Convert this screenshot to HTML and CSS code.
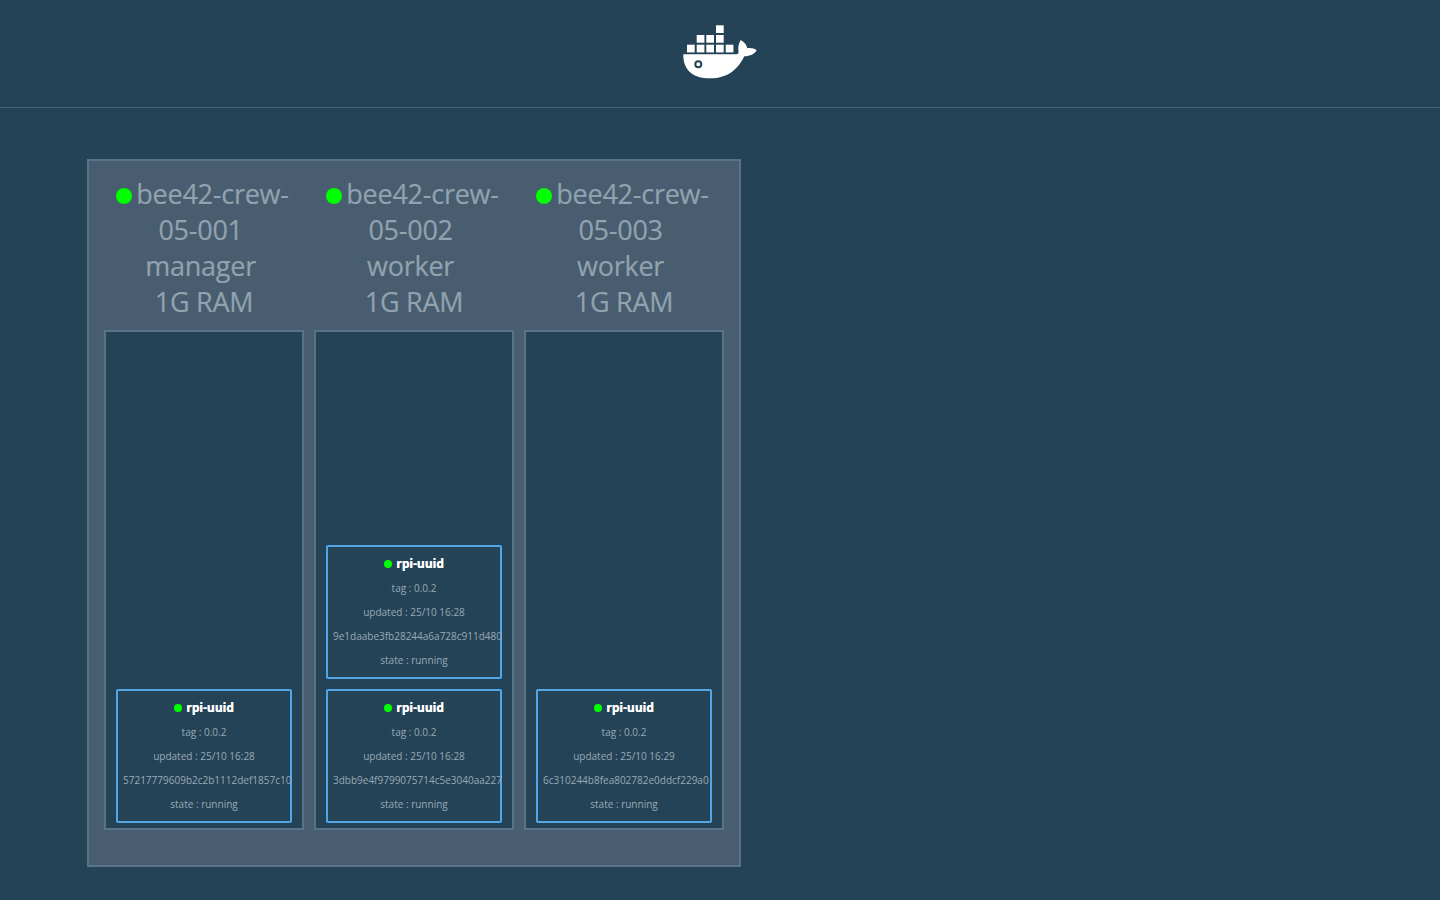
FILE: index.html
```html
<!DOCTYPE html>
<html lang="en">
<head>
    <meta charset="UTF-8">
    <meta name="viewport" content="width=device-width, initial-scale=1.0">
    <title>Swarm Visualizer</title>
    <link rel="stylesheet" href="styles.css">
</head>
<body>
    <header class="topbar">
        <svg class="logo" width="74" height="54" viewBox="0 0 74 54" fill="#fff">
            <rect x="33" y="0.3" width="7.7" height="7.7"/>
            <rect x="13.7" y="10" width="7.7" height="7.7"/>
            <rect x="23.3" y="10" width="7.7" height="7.7"/>
            <rect x="33" y="10" width="7.7" height="7.7"/>
            <rect x="4" y="19.7" width="7.7" height="7.7"/>
            <rect x="13.7" y="19.7" width="7.7" height="7.7"/>
            <rect x="23.3" y="19.7" width="7.7" height="7.7"/>
            <rect x="33" y="19.7" width="7.7" height="7.7"/>
            <rect x="42.7" y="19.7" width="7.7" height="7.7"/>
            <path d="M0.3 29.3H52C54.5 29.3 56 28.6 55.5 26.5C54.8 22.5 55.6 18.5 57.7 15C60.8 16.5 63.5 19.5 64.3 23.3C67.5 22.6 71 23.2 73.7 25.2C71.8 29 67 31.2 61.3 31.2C57.5 39 51.5 46.5 43.7 50C37 53 30 53.6 23.7 53.3C11 52.5 0 46 0.3 29.3Z"/>
            <circle cx="15.3" cy="39.3" r="3" fill="none" stroke="#254356" stroke-width="2"/>
        </svg>
    </header>

    <main class="content">
        <section class="swarm">
            <div class="node">
                <h2 class="node-title"><span class="dot dot-big"></span><span class="host">bee42-crew-</span>05-001&nbsp;<br>manager&nbsp;<br>1G RAM</h2>
                <div class="node-body">
                    <div class="card">
                        <div class="card-title"><span class="dot"></span>rpi-uuid</div>
                        <div>tag : 0.0.2</div>
                        <div>updated : 25/10 16:28</div>
                        <div>57217779609b2c2b1112def1857c10</div>
                        <div>state : running</div>
                    </div>
                </div>
            </div>
            <div class="node">
                <h2 class="node-title"><span class="dot dot-big"></span><span class="host">bee42-crew-</span>05-002&nbsp;<br>worker&nbsp;<br>1G RAM</h2>
                <div class="node-body">
                    <div class="card">
                        <div class="card-title"><span class="dot"></span>rpi-uuid</div>
                        <div>tag : 0.0.2</div>
                        <div>updated : 25/10 16:28</div>
                        <div>9e1daabe3fb28244a6a728c911d480</div>
                        <div>state : running</div>
                    </div>
                    <div class="card">
                        <div class="card-title"><span class="dot"></span>rpi-uuid</div>
                        <div>tag : 0.0.2</div>
                        <div>updated : 25/10 16:28</div>
                        <div>3dbb9e4f9799075714c5e3040aa227</div>
                        <div>state : running</div>
                    </div>
                </div>
            </div>
            <div class="node">
                <h2 class="node-title"><span class="dot dot-big"></span><span class="host">bee42-crew-</span>05-003&nbsp;<br>worker&nbsp;<br>1G RAM</h2>
                <div class="node-body">
                    <div class="card">
                        <div class="card-title"><span class="dot"></span>rpi-uuid</div>
                        <div>tag : 0.0.2</div>
                        <div>updated : 25/10 16:29</div>
                        <div>6c310244b8fea802782e0ddcf229a0</div>
                        <div>state : running</div>
                    </div>
                </div>
            </div>
        </section>
    </main>
</body>
</html>
```

FILE: styles.css
```css
body {
    margin: 0;
    min-height: 900px;
    background-color: #254356;
    font-family: "Open Sans", sans-serif;
}
.topbar {
    height: 107px;
    border-bottom: 1px solid #4a6374;
    display: flex;
    justify-content: center;
}
.logo {
    margin-top: 25px;
}
.content {
    padding: 51px 0 0 87px;
}
.swarm {
    display: flex;
    gap: 10px;
    width: fit-content;
    padding: 15px 15px 35px;
    background-color: #485d6f;
    border: 2px solid #587486;
}
.node {
    width: 200px;
}
.node-title {
    margin: 0 0 10px;
    font-size: 27px;
    font-weight: 400;
    line-height: 36px;
    letter-spacing: -0.25px;
    text-align: center;
    color: #92a2af;
    -webkit-text-stroke: 0.2px #92a2af;
}
.host {
    padding-right: 3px;
}
.node-body {
    height: 500px;
    box-sizing: border-box;
    padding: 0 10px 5px;
    display: flex;
    flex-direction: column;
    justify-content: flex-end;
    gap: 10px;
    background-color: #254356;
    border: 2px solid #587486;
}
.card {
    padding: 5px;
    border: 2px solid #52a5e6;
    border-radius: 2px;
    font-size: 10px;
    line-height: 24px;
    text-align: center;
    white-space: nowrap;
    color: #98a9b7;
}
.card-title {
    font-size: 12px;
    font-weight: 700;
    color: #fff;
    text-shadow: 0.3px 0 #fff;
}
.dot {
    display: inline-block;
    width: 8px;
    height: 8px;
    margin-right: 4px;
    border-radius: 50%;
    background-color: #0f0;
}
.dot-big {
    width: 16px;
    height: 16px;
}
```
